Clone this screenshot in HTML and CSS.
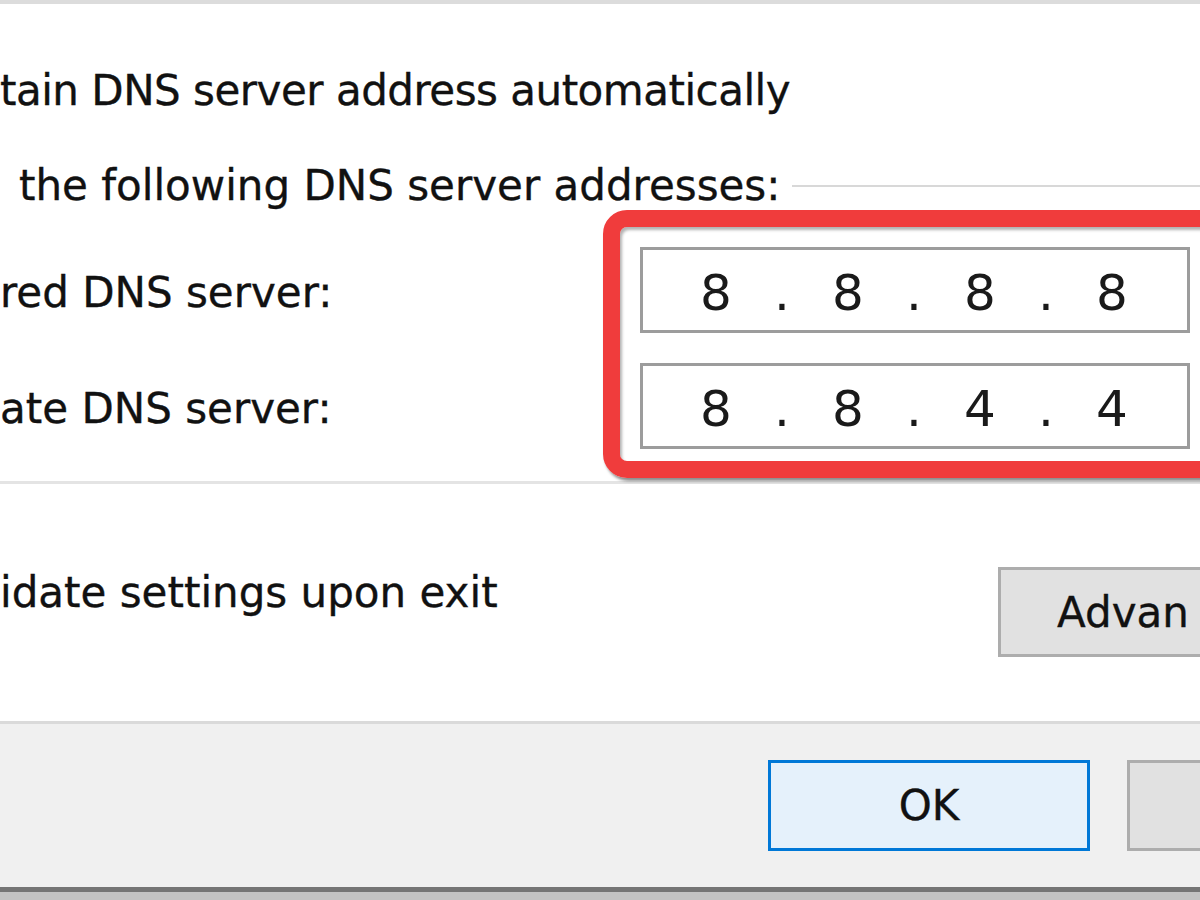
FILE: index.html
```html
<!DOCTYPE html>
<html lang="en">
<head>
<meta charset="utf-8">
<title>Internet Protocol Version 4 (TCP/IPv4) Properties</title>
<link rel="stylesheet" href="styles.css">
</head>
<body>
<div class="window">
  <div class="top-edge"></div>
  <div class="panel">
    <div class="text-row row-auto">tain DNS server address automatically</div>
    <div class="legend-row"><span class="legend-text">the following DNS server addresses:</span><span class="legend-line"></span></div>
    <div class="group">
      <div class="labels">
        <div class="label">red DNS server:</div>
        <div class="label">ate DNS server:</div>
      </div>
      <div class="highlight">
        <div class="ip-box">
          <span class="octet">8</span><span class="dot">.</span><span class="octet">8</span><span class="dot">.</span><span class="octet">8</span><span class="dot">.</span><span class="octet">8</span>
        </div>
        <div class="ip-box">
          <span class="octet">8</span><span class="dot">.</span><span class="octet">8</span><span class="dot">.</span><span class="octet">4</span><span class="dot">.</span><span class="octet">4</span>
        </div>
      </div>
    </div>
    <div class="validate-row">
      <span class="validate-label">idate settings upon exit</span>
      <button class="btn btn-advanced" type="button">Advan</button>
    </div>
  </div>
  <div class="footer">
    <button class="btn btn-ok" type="button">OK</button>
    <button class="btn btn-cancel" type="button" aria-label="Cancel"></button>
  </div>
  <div class="desk"></div>
</div>
</body>
</html>
```

FILE: styles.css
```css
* { box-sizing: border-box; }

html, body { margin: 0; padding: 0; }

body {
  width: 1200px;
  height: 900px;
  overflow: hidden;
  background: #ffffff;
  font-family: "DejaVu Sans", "Liberation Sans", sans-serif;
  font-size: 42px;
  color: #111111;
  -webkit-text-stroke: 0.35px #111111;
}

.window {
  display: flex;
  flex-direction: column;
  height: 900px;
}

.top-edge {
  flex: none;
  height: 4px;
  background: #dcdcdc;
}

.panel {
  flex: none;
  padding-top: 62px;
}

.text-row {
  height: 50px;
  line-height: 50px;
  white-space: nowrap;
}

.row-auto {
  letter-spacing: -0.5px;
}

.legend-row {
  display: flex;
  align-items: center;
  height: 50px;
  line-height: 50px;
  margin-top: 45px;
  padding-left: 19px;
  white-space: nowrap;
}

.legend-text { flex: none; }

.legend-line {
  flex: 1;
  height: 2px;
  background: #d8d8d8;
  margin-left: 12px;
}

.group {
  display: flex;
  margin-top: -1px;
  padding-bottom: 3px;
  border-bottom: 3px solid #e4e4e4;
}

.labels {
  flex: 0 0 603px;
  padding-top: 40px;
  display: flex;
  flex-direction: column;
  gap: 30px;
  white-space: nowrap;
}

.label {
  height: 86px;
  line-height: 86px;
}

.highlight {
  flex: 0 0 640px;
  border: 17px solid #f03c3c;
  border-radius: 24px;
  padding: 20px 0 12px 20px;
  display: flex;
  flex-direction: column;
  gap: 30px;
  box-shadow: 2px 3px 3px rgba(0, 0, 0, 0.45), inset 2px 3px 3px rgba(0, 0, 0, 0.3);
}

.ip-box {
  width: 550px;
  height: 86px;
  border: 3px solid #9c9c9c;
  background: #ffffff;
  display: flex;
  padding-left: 18px;
  padding-top: 6px;
  font-size: 50px;
  line-height: 74px;
  color: #1a1a1a;
  -webkit-text-stroke: 0;
}

.octet { width: 110px; text-align: center; }

.dot { width: 22px; text-align: center; }

.validate-row {
  display: flex;
  align-items: flex-start;
  margin-top: 83px;
  height: 90px;
}

.validate-label {
  flex: 0 0 998px;
  margin-top: 1px;
  line-height: 50px;
  white-space: nowrap;
}

.btn {
  font: inherit;
  color: #111111;
  padding: 0;
  margin: 0;
  text-align: center;
  white-space: nowrap;
}

.btn-advanced {
  flex: 0 0 360px;
  height: 90px;
  border: 3px solid #adadad;
  background: #e1e1e1;
  text-align: left;
  padding-left: 56px;
}

.footer {
  flex: none;
  margin-top: 64px;
  border-top: 3px solid #dadada;
  background: #f0f0f0;
  padding: 36px 0 36px 768px;
  display: flex;
  gap: 37px;
}

.btn-ok {
  flex: 0 0 322px;
  height: 91px;
  border: 3px solid #0078d7;
  background: #e5f1fb;
}

.btn-cancel {
  flex: 0 0 322px;
  height: 91px;
  border: 3px solid #adadad;
  background: #e1e1e1;
}

.desk {
  flex: 1;
  background: #c3c3c3;
  border-top: 5px solid #757575;
}
```
